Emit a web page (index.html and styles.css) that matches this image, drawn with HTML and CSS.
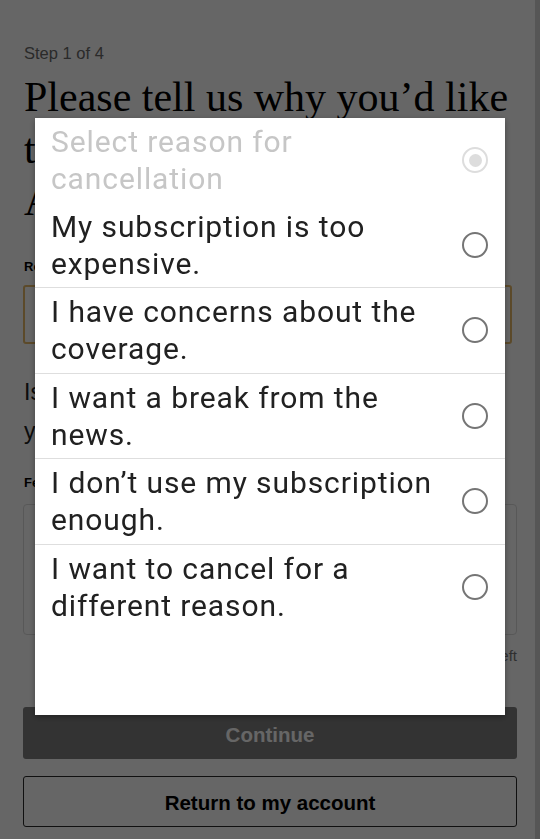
FILE: index.html
```html
<!DOCTYPE html>
<html lang="en">
<head>
<meta charset="utf-8">
<title>Cancel subscription</title>
<link rel="stylesheet" href="styles.css">
</head>
<body>
<div class="page">
  <main class="content">
    <p class="step">Step 1 of 4</p>
    <h1 class="title">Please tell us why you’d like to cancel your subscription. Any feedback helps.</h1>
    <label class="field-label">Reason for cancellation</label>
    <div class="select">Select reason for cancellation</div>
    <p class="question">Is there anything we could have done to keep you as a subscriber?</p>
    <label class="field-label feedback-label">Feedback (optional)</label>
    <div class="textarea"></div>
    <p class="count">500 characters left</p>
    <button class="btn btn-primary" type="button">Continue</button>
    <button class="btn btn-secondary" type="button">Return to my account</button>
  </main>
  <div class="scrollbar"></div>
</div>

<div class="backdrop">
  <div class="dialog" role="listbox">
    <div class="option placeholder">
      <span class="option-text">Select reason for cancellation</span>
      <span class="radio checked"></span>
    </div>
    <div class="option">
      <span class="option-text">My subscription is too expensive.</span>
      <span class="radio"></span>
    </div>
    <div class="option divided">
      <span class="option-text">I have concerns about the coverage.</span>
      <span class="radio"></span>
    </div>
    <div class="option divided">
      <span class="option-text">I want a break from the news.</span>
      <span class="radio"></span>
    </div>
    <div class="option divided">
      <span class="option-text">I don’t use my subscription enough.</span>
      <span class="radio"></span>
    </div>
    <div class="option divided">
      <span class="option-text">I want to cancel for a different reason.</span>
      <span class="radio"></span>
    </div>
  </div>
</div>
</body>
</html>
```

FILE: styles.css
```css
* { box-sizing: border-box; }

html, body {
  margin: 0;
  padding: 0;
  background: #ffffff;
  height: 100%;
  overflow: hidden;
}

.page {
  display: flex;
  width: 540px;
  height: 839px;
}

.content {
  flex: 1;
  min-width: 0;
  padding: 44px 18px 0 23px;
  display: flex;
  flex-direction: column;
  font-family: "Liberation Sans", Arial, sans-serif;
}

.scrollbar {
  width: 5px;
  background: #d6d6d6;
}

.step {
  margin: 0;
  font-size: 16.5px;
  line-height: 19px;
  color: #6a6a6a;
  padding-left: 1px;
}

.title {
  margin: 8px 0 0;
  padding-left: 1px;
  font-family: "Liberation Serif", "Times New Roman", serif;
  font-weight: normal;
  font-size: 42px;
  line-height: 52px;
  color: #000;
}

.field-label {
  display: block;
  margin-top: 32px;
  font-size: 13px;
  line-height: 16px;
  font-weight: bold;
  color: #000;
  padding-left: 1px;
}

.select {
  margin-top: 10px;
  height: 59px;
  width: 489px;
  border: 2px solid #e6b969;
  border-radius: 3px;
  color: transparent;
  font-size: 16px;
}

.question {
  margin: 29px 0 0;
  font-size: 23px;
  line-height: 39px;
  color: #222;
  padding-left: 1px;
}

.feedback-label {
  margin-top: 24px;
}

.textarea {
  margin-top: 13px;
  height: 131px;
  border: 1px solid #dcdcdc;
  border-radius: 4px;
}

.count {
  margin: 12px 0 0;
  font-size: 15px;
  line-height: 18px;
  color: #777;
  text-align: right;
}

.btn {
  display: block;
  width: 100%;
  font-family: "Liberation Sans", Arial, sans-serif;
  font-weight: bold;
  font-size: 20.5px;
  border-radius: 3px;
  cursor: pointer;
}

.btn-primary {
  margin-top: 42px;
  height: 52px;
  background: #808080;
  border: none;
  color: #ffffff;
  padding-top: 4px;
}

.btn-secondary {
  margin-top: 17px;
  height: 51px;
  background: #ffffff;
  border: 1px solid #2a2a2a;
  color: #000;
  padding-top: 4px;
}

.backdrop {
  position: fixed;
  inset: 0;
  background: rgba(0, 0, 0, 0.6);
  display: flex;
  justify-content: center;
  align-items: flex-start;
  padding-top: 118px;
}

.dialog {
  width: 470px;
  height: 597px;
  background: #ffffff;
  box-shadow: 0 2px 6px rgba(0, 0, 0, 0.35);
  font-family: Roboto, "Noto Sans", sans-serif;
  display: flex;
  flex-direction: column;
}

.option {
  display: flex;
  align-items: center;
  padding: 5.25px 17px 5.25px 16px;
  font-size: 30px;
  line-height: 37px;
  letter-spacing: 0.9px;
  color: #212121;
}

.option.divided {
  border-top: 1px solid #dedede;
}

.option.placeholder {
  color: #c6c6c6;
}

.option-text {
  flex: 1;
  padding-right: 18px;
}

.radio {
  width: 26px;
  height: 26px;
  border: 2.5px solid #757575;
  border-radius: 50%;
  flex: none;
  display: flex;
  align-items: center;
  justify-content: center;
}

.radio.checked {
  border-color: #dddddd;
}

.radio.checked::after {
  content: "";
  width: 13px;
  height: 13px;
  border-radius: 50%;
  background: #dddddd;
}
```
